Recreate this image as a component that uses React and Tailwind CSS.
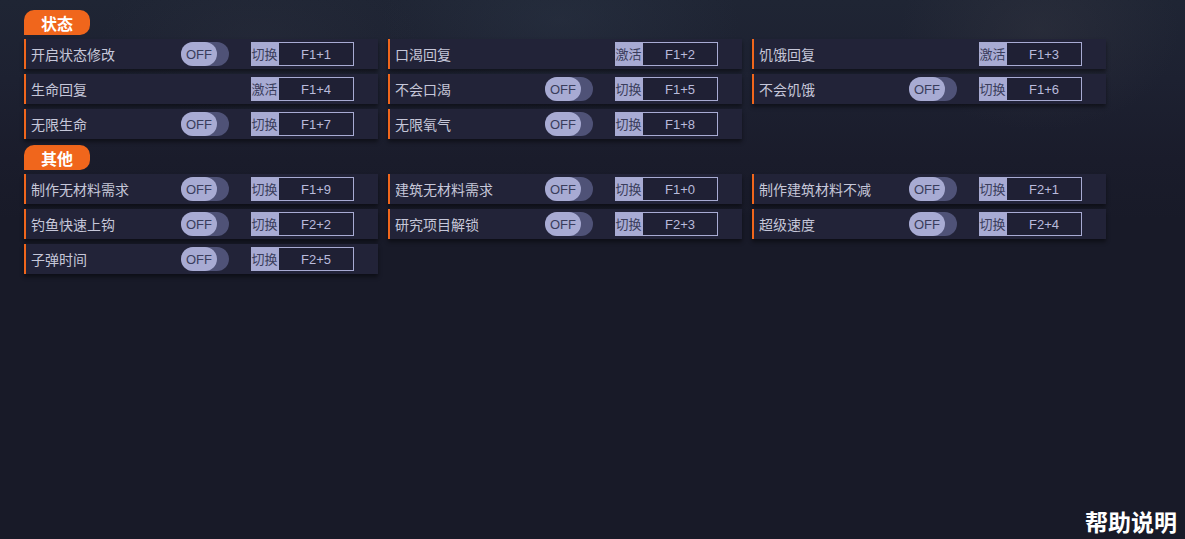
import React from "react";

const FONT = { fontFamily: '"Microsoft YaHei", "Noto Sans CJK SC", "Noto Sans", sans-serif' };

function Toggle() {
  return (
    <div className="relative h-[24px] w-[48px] rounded-full bg-[#4f5277]">
      <div className="flex h-[24px] w-[36px] items-center justify-center rounded-full bg-[#a8abd3] pt-[1px] text-[13px] leading-none text-[#3a3d5c]" style={{ fontFamily: '"Liberation Sans", sans-serif' }}>
        OFF
      </div>
    </div>
  );
}

function Row({ label, toggle, mode, keyName }) {
  return (
    <div className="flex h-[30px] items-center border-l-2 border-[#f0661c] bg-[#222338] shadow-[0_3px_4px_rgba(0,0,0,0.45)]">
      <div className="w-[155px] pl-[5px] text-[14px] leading-none text-[#c6c7d9]">{label}</div>
      <div className="w-[70px]">{toggle ? <Toggle /> : null}</div>
      <div className="flex h-[24px]">
        <div className="flex w-[27px] items-center justify-center bg-[#a8abd3] pb-[2px] text-[13px] leading-none text-[#3a3d5c]">{mode}</div>
        <div className="flex w-[76px] items-center justify-center border border-[#a8abd3] bg-[#1f2034] text-[13px] leading-none text-[#b9bbdc]" style={{ fontFamily: '"Liberation Sans", sans-serif' }}>
          {keyName}
        </div>
      </div>
    </div>
  );
}

function Header({ title }) {
  return (
    <div className="flex h-[25px] w-[66px] items-center justify-center rounded-[10px] rounded-bl-none bg-[#f0661c] text-[16px] font-bold leading-none text-white">
      {title}
    </div>
  );
}

const sec1 = [
  { label: "开启状态修改", toggle: true, mode: "切换", keyName: "F1+1" },
  { label: "口渴回复", toggle: false, mode: "激活", keyName: "F1+2" },
  { label: "饥饿回复", toggle: false, mode: "激活", keyName: "F1+3" },
  { label: "生命回复", toggle: false, mode: "激活", keyName: "F1+4" },
  { label: "不会口渴", toggle: true, mode: "切换", keyName: "F1+5" },
  { label: "不会饥饿", toggle: true, mode: "切换", keyName: "F1+6" },
  { label: "无限生命", toggle: true, mode: "切换", keyName: "F1+7" },
  { label: "无限氧气", toggle: true, mode: "切换", keyName: "F1+8" },
];

const sec2 = [
  { label: "制作无材料需求", toggle: true, mode: "切换", keyName: "F1+9" },
  { label: "建筑无材料需求", toggle: true, mode: "切换", keyName: "F1+0" },
  { label: "制作建筑材料不减", toggle: true, mode: "切换", keyName: "F2+1" },
  { label: "钓鱼快速上钩", toggle: true, mode: "切换", keyName: "F2+2" },
  { label: "研究项目解锁", toggle: true, mode: "切换", keyName: "F2+3" },
  { label: "超级速度", toggle: true, mode: "切换", keyName: "F2+4" },
  { label: "子弹时间", toggle: true, mode: "切换", keyName: "F2+5" },
];

function Grid({ items }) {
  return (
    <div className="mt-[4px] grid grid-cols-[354px_354px_354px] gap-x-[10px] gap-y-[5px]">
      {items.map((it) => (
        <Row key={it.label} {...it} />
      ))}
    </div>
  );
}

export default function App() {
  return (
    <div
      className="flex h-[539px] w-[1185px] flex-col overflow-hidden bg-[#181a28]"
      style={{
        ...FONT,
        backgroundImage:
          "radial-gradient(ellipse 180px 90px at 560px 20px, rgba(50,62,80,0.3), transparent), radial-gradient(ellipse 140px 100px at 1040px 30px, rgba(62,62,72,0.3), transparent), radial-gradient(ellipse 160px 80px at 260px 40px, rgba(50,54,68,0.25), transparent), linear-gradient(to bottom, #1f2534 0px, #1d2131 80px, #1a1c2b 160px, #181a28 220px)",
      }}
    >
      <div className="pl-[24px] pt-[10px]">
        <Header title="状态" />
        <Grid items={sec1} />
        <div className="mt-[6px]">
          <Header title="其他" />
        </div>
        <Grid items={sec2} />
      </div>
      <div className="mt-auto self-end pb-[3px] pr-[8px] text-[23px] font-bold leading-[30px] text-white">帮助说明</div>
    </div>
  );
}
